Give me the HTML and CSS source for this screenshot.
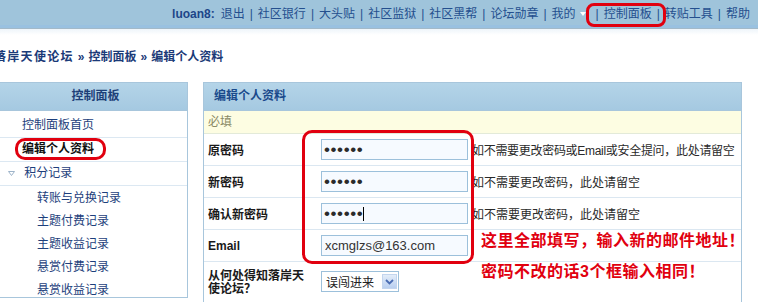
FILE: index.html
```html
<!DOCTYPE html>
<html>
<head>
    <meta charset="utf-8">
    <title>编辑个人资料</title>
    <link rel="stylesheet" href="styles.css">
</head>
<body>
    <div class="topbar">
        <div class="usernav">
            <b class="uname">luoan8:</b>
            <a href="#">退出</a><span class="sep">|</span>
            <a href="#">社区银行</a><span class="sep">|</span>
            <a href="#">大头贴</a><span class="sep">|</span>
            <a href="#">社区监狱</a><span class="sep">|</span>
            <a href="#">社区黑帮</a><span class="sep">|</span>
            <a href="#">论坛勋章</a><span class="sep">|</span>
            <a href="#" class="mine">我的<span class="caret"></span></a>
            <span class="mark"><span class="sep">|</span><a href="#">控制面板</a><span class="sep">|</span></span>
            <a href="#">转贴工具</a><span class="sep">|</span>
            <a href="#">帮助</a>
        </div>
    </div>
    <div class="shade"></div>

    <div class="wrap">
        <div class="crumb">
            <a href="#" class="home">落岸天使论坛</a><span class="arrow">»</span><a href="#">控制面板</a><span class="arrow">»</span><span>编辑个人资料</span>
        </div>

        <div class="layout">
            <div class="side">
                <h3>控制面板</h3>
                <ul class="menu">
                    <li><a href="#">控制面板首页</a></li>
                    <li class="current"><span class="ring">编辑个人资料</span></li>
                    <li class="fold">
                        <svg width="7" height="5" viewBox="0 0 7 5"><path d="M0.5 0.5 L6.5 0.5 L3.5 4.5 Z" fill="none" stroke="#9db3c9" stroke-width="1"/></svg>
                        <a href="#">积分记录</a>
                    </li>
                </ul>
                <ul class="submenu">
                    <li><a href="#">转账与兑换记录</a></li>
                    <li><a href="#">主题付费记录</a></li>
                    <li><a href="#">主题收益记录</a></li>
                    <li><a href="#">悬赏付费记录</a></li>
                    <li><a href="#">悬赏收益记录</a></li>
                </ul>
            </div>

            <div class="main">
                <h3>编辑个人资料</h3>
                <div class="req">必填</div>
                <div class="row">
                    <label>原密码</label>
                    <div class="field"><input type="password" class="pw" value="123456"></div>
                    <div class="hint long">如不需要更改密码或Email或安全提问，此处请留空</div>
                </div>
                <div class="row">
                    <label>新密码</label>
                    <div class="field"><input type="password" class="pw" value="123456"></div>
                    <div class="hint">如不需要更改密码，此处请留空</div>
                </div>
                <div class="row">
                    <label>确认新密码</label>
                    <div class="field"><input type="password" class="pw" value="123456"><span class="cursor"></span></div>
                    <div class="hint">如不需要更改密码，此处请留空</div>
                </div>
                <div class="row">
                    <label>Email</label>
                    <div class="field"><input type="text" value="xcmglzs@163.com"></div>
                    <div class="note">这里全部填写，输入新的邮件地址！</div>
                </div>
                <div class="row row-q">
                    <label>从何处得知落岸天使论坛？</label>
                    <div class="field">
                        <div class="select">
                            <span>误闯进来</span>
                            <span class="drop"><svg width="9" height="6" viewBox="0 0 9 6"><path d="M1 1 L4.5 4.5 L8 1" fill="none" stroke="#4a6cb3" stroke-width="1.8"/></svg></span>
                        </div>
                    </div>
                    <div class="note note-top">密码不改的话3个框输入相同！</div>
                </div>
                <div class="callout"></div>
            </div>
        </div>
    </div>
</body>
</html>
```

FILE: styles.css
```css
body {
    margin: 0;
    font-family: "Liberation Sans", "Noto Sans CJK SC", sans-serif;
    font-size: 12px;
    color: #333;
    background-color: #fff;
    overflow: hidden;
}

a {
    color: inherit;
    text-decoration: none;
}

ul {
    list-style: none;
    margin: 0;
    padding: 0;
}

/* top user bar */
.topbar {
    height: 25px;
    background-color: #9fc4db;
    border-bottom: 3px solid #99c1e0;
    display: flex;
    justify-content: flex-end;
    align-items: center;
    padding-right: 8px;
}

.usernav {
    display: flex;
    align-items: center;
    line-height: 16px;
    padding-top: 3px;
    color: #244f8e;
    white-space: nowrap;
}

.uname {
    color: #1d4689;
    margin-right: 6px;
}

.sep {
    margin: 0 5px;
}

.caret {
    display: inline-block;
    width: 0;
    height: 0;
    border-left: 3px solid transparent;
    border-right: 3px solid transparent;
    border-top: 4px solid #fff;
    margin: 0 5px 2px 4px;
    vertical-align: middle;
}

.mark {
    position: relative;
}

.mark::after {
    content: "";
    position: absolute;
    left: -5px;
    right: -1px;
    top: -3px;
    bottom: -5px;
    border: 3px solid #e1000f;
    border-radius: 8px;
}

.shade {
    height: 6px;
    border-top: 1px solid #a3b9c8;
    background: linear-gradient(#eef5fa, #fff);
}

/* page */
.wrap {
    margin-left: -6px;
}

.crumb {
    margin: 14px 0 17px 0;
    line-height: 16px;
    font-weight: bold;
    color: #1b3a78;
    white-space: nowrap;
}

.crumb .home {
    letter-spacing: 1.3px;
}

.crumb .arrow {
    margin: 0 4px;
}

.layout {
    display: flex;
    gap: 15px;
    align-items: flex-start;
}

/* sidebar */
.side {
    width: 192px;
    border: 1px solid #a8c6dc;
    height: 214px;
}

.side h3,
.main h3 {
    margin: 0;
    height: 27px;
    line-height: 27px;
    font-size: 12px;
    background: linear-gradient(#b4d4e8, #a5c9e1);
    border-bottom: 1px solid #a8c6dc;
}

.side h3 {
    text-align: center;
    padding-left: 9px;
    color: #1d3f78;
}

.menu {
    padding-top: 3px;
}

.menu li {
    height: 23px;
    line-height: 23px;
    border-bottom: 1px solid #dce8f2;
    padding-left: 27px;
    color: #1e3f7c;
}

.menu li.current {
    font-weight: bold;
    color: #111;
}

.ring {
    position: relative;
}

.ring::after {
    content: "";
    position: absolute;
    left: -7px;
    right: -12px;
    top: -4px;
    bottom: -4px;
    border: 3px solid #e1000f;
    border-radius: 10px;
}

.menu li.fold {
    padding-left: 13px;
}

.fold svg {
    margin-right: 6px;
    vertical-align: middle;
}

.submenu {
    padding-top: 1px;
}

.submenu li {
    height: 23px;
    line-height: 23px;
    padding-left: 42px;
    color: #1e3f7c;
}

/* main panel */
.main {
    position: relative;
    width: 537px;
    border: 1px solid #a8c6dc;
    height: 240px;
}

.main h3 {
    padding-left: 10px;
    color: #1a4a8c;
}

.req {
    height: 22px;
    line-height: 22px;
    padding-left: 4px;
    background-color: #fdfde2;
    color: #8a8a66;
    border-bottom: 1px solid #e3ead9;
}

.row {
    display: grid;
    grid-template-columns: 112px 156px 1fr;
    align-items: center;
    height: 31px;
    border-bottom: 1px solid #dbe7f1;
}

.row label {
    padding: 0 6px 0 4px;
    font-weight: bold;
    color: #1a1a1a;
}

.field {
    position: relative;
    padding-left: 5px;
    display: flex;
    align-items: center;
}

.field input {
    box-sizing: border-box;
    width: 147px;
    height: 21px;
    border: 1px solid #9cc0db;
    background-color: #f6faff;
    padding: 0 3px;
    font-family: "Liberation Sans", sans-serif;
    font-size: 13px;
    color: #333;
    outline: none;
}

.field input.pw {
    font-size: 17px;
    letter-spacing: 0.6px;
    padding: 0 2px;
    color: #2b2b2b;
}

/* text caret left in the third box */
.cursor {
    position: absolute;
    left: 47px;
    top: 4px;
    width: 1px;
    height: 14px;
    background-color: #000;
}

.hint {
    white-space: nowrap;
    color: #2a2a2a;
}

.hint.long {
    letter-spacing: -0.3px;
}

.note {
    white-space: nowrap;
    padding-left: 9px;
    font-size: 16px;
    line-height: 20px;
    font-weight: bold;
    letter-spacing: 0.5px;
    color: #e1000f;
    margin-bottom: 10px;
}

.row-q {
    height: auto;
    align-items: start;
    border-bottom: none;
}

.row-q label {
    line-height: 13px;
    margin-top: 8px;
}

.row-q .field {
    margin-top: 9px;
}

.note-top {
    margin: 0;
}

.select {
    box-sizing: border-box;
    width: 78px;
    height: 21px;
    border: 1px solid #9cc0db;
    background-color: #fff;
    display: flex;
    align-items: center;
    justify-content: space-between;
    padding: 0 1px 0 4px;
    color: #222;
}

.drop {
    width: 15px;
    height: 15px;
    display: flex;
    align-items: center;
    justify-content: center;
    background: linear-gradient(#e3edf9, #b9cff0);
    border: 1px solid #c3d5ee;
    box-sizing: border-box;
}

/* red marker drawn over the form */
.callout {
    position: absolute;
    left: 98px;
    top: 47px;
    width: 172px;
    height: 134px;
    box-sizing: border-box;
    border: 3px solid #e1000f;
    border-radius: 10px;
}
```
